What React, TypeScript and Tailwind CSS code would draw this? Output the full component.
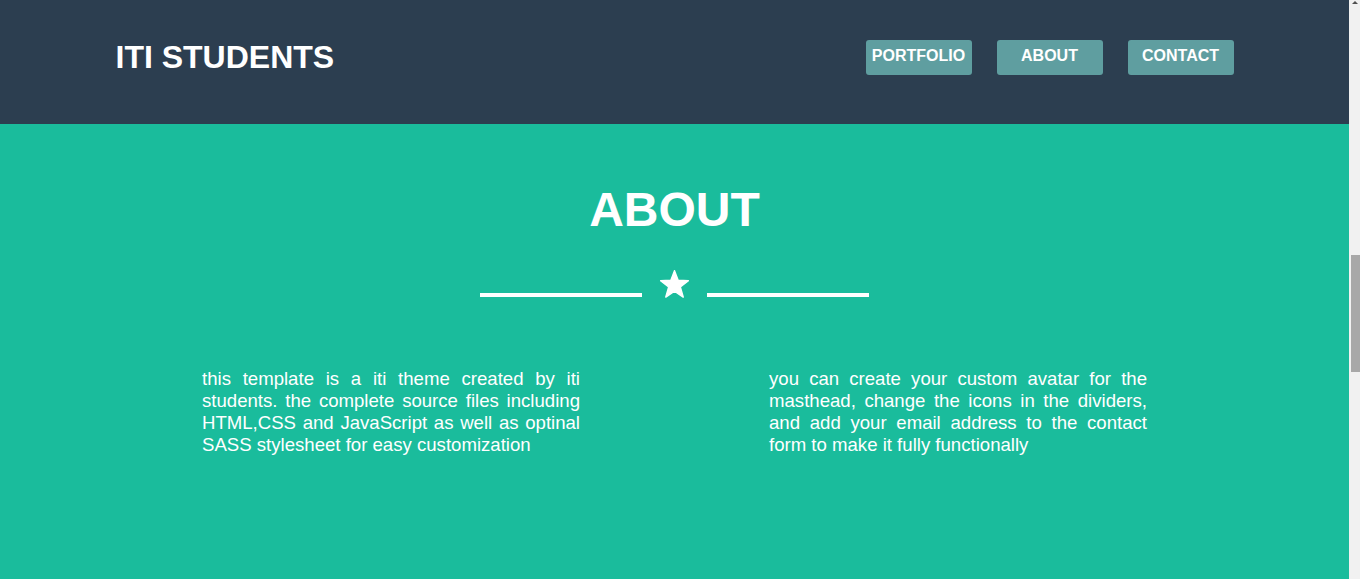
const NAV = ["PORTFOLIO", "ABOUT", "CONTACT"];

function Star() {
  return (
    <svg viewBox="0 0 100 96" className="h-[28px] w-[29px] fill-white">
      <path
        d="M50 2 L62.5 35 L98 36.5 L70 58.5 L80 93 L50 73 L20 93 L30 58.5 L2 36.5 L37.5 35 Z"
        strokeLinejoin="round"
        stroke="white"
        strokeWidth="5"
      />
    </svg>
  );
}

export default function App() {
  return (
    <div className="flex h-screen font-['Liberation_Sans',Arial,sans-serif] text-white">
      <div className="flex min-w-0 flex-1 flex-col">
        {/* NAVBAR */}
        <header className="h-[124px] shrink-0 bg-[#2c3e50]">
          <div className="mx-auto flex w-[1118px] items-start justify-between pt-[40px]">
            <h1 className="mt-[1px] text-[32px] font-bold leading-none">ITI STUDENTS</h1>
            <nav className="flex gap-[25px]">
              {NAV.map((item) => (
                <a
                  key={item}
                  href={`#${item.toLowerCase()}`}
                  className="flex h-[35px] w-[106px] items-center justify-center rounded-[3px] bg-[#5f9ea0] pb-[4px] text-[16px] font-bold"
                >
                  {item}
                </a>
              ))}
            </nav>
          </div>
        </header>

        {/* ABOUT */}
        <section id="about" className="flex-1 bg-[#1abc9c] pt-[62px]">
          <h2 className="text-center text-[48px] font-bold leading-none">ABOUT</h2>

          {/* Divider */}
          <div className="mt-[36px] flex items-end justify-center gap-[18px]">
            <div className="mb-[1px] h-[4px] w-[162px] bg-white" />
            <Star />
            <div className="mb-[1px] h-[4px] w-[162px] bg-white" />
          </div>

          <div className="mx-auto mt-[70px] flex w-[945px] justify-between text-justify text-[18.6px] leading-[22px]">
            <p className="w-[378px]">
              this template is a iti theme created by iti students. the complete source files
              including HTML,CSS and JavaScript as well as optinal SASS stylesheet for easy
              customization
            </p>
            <p className="w-[378px]">
              you can create your custom avatar for the masthead, change the icons in the dividers,
              and add your email address to the contact form to make it fully functionally
            </p>
          </div>
        </section>
      </div>

      {/* Scrollbar */}
      <div className="flex w-[11px] shrink-0 flex-col items-center bg-[#f1f1f1]">
        <div className="mt-[1px] h-0 w-0 border-x-[3px] border-b-[3px] border-x-transparent border-b-[#505050]" />
        <div className="ml-[2px] mt-[251px] h-[117px] w-[9px] bg-[#a8a8a8]" />
      </div>
    </div>
  );
}
